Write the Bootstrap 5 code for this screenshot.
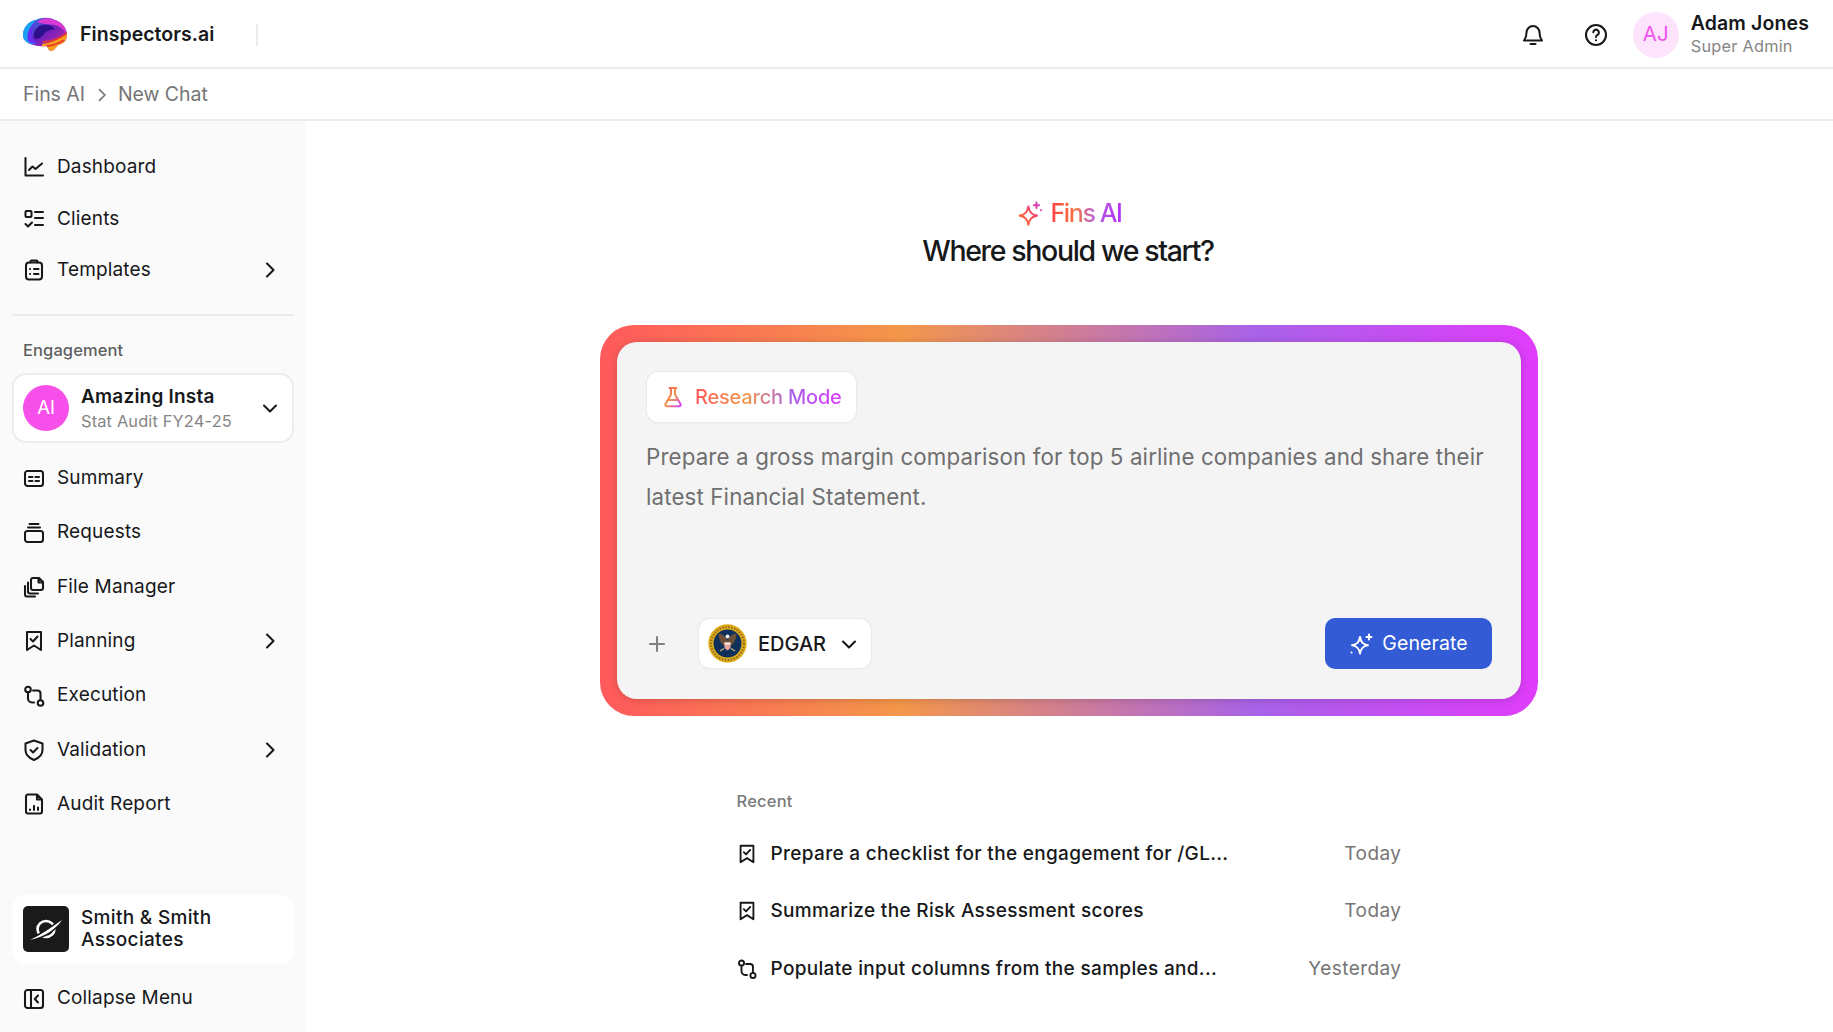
<!DOCTYPE html>
<html lang="en">
<head>
<meta charset="utf-8">
<title>Fins AI</title>
<link href="https://cdn.jsdelivr.net/npm/bootstrap@5.3.0/dist/css/bootstrap.min.css" rel="stylesheet">
<style>
html,body{height:100%}
body{font-family:Inter,"Liberation Sans",sans-serif;color:#17181a;background:#fff;overflow:hidden;font-size:19px}
svg.ico{width:24px;height:24px;fill:none;stroke:currentColor;stroke-width:2.05;stroke-linecap:round;stroke-linejoin:round;flex:none}
svg.ico.stroke-spark{stroke:url(#gradSpark);width:26px;height:26px;stroke-width:1.9}
svg.ico.stroke-flask{stroke:url(#gradFlask)}
.topbar{height:69px;border-bottom:2px solid #ececec;padding:2px 24px 0 22px}
.brand-name{font-size:19.5px;font-weight:600;letter-spacing:.05px;margin-left:12px}
.vsep{width:2px;height:22px;background:#ececec;margin-left:41px}
.tool-ico{color:#17181a;margin-right:38.5px}
.tool-ico:last-of-type{margin-right:25px}
.person-av{width:46px;height:46px;background:#fde3fc;color:#ee55ee;font-size:20.5px}
.person-block{margin-bottom:2px}
.person-name{font-size:19.5px;font-weight:600;line-height:24px;letter-spacing:.12px}
.person-role{font-size:16.3px;color:#858585;line-height:22px;letter-spacing:.25px}
.crumbs{height:52px;border-bottom:2px solid #ececec;padding:2px 23px 0;color:#757575;font-size:19.5px;letter-spacing:-.05px}
.crumbs svg{width:20px;height:20px;margin:0 6px 0 7px}
.shell{height:911px}
.side{width:305px;background:#fafafa;padding:20px 11.5px 7px;flex:none}
.menu-row{padding:1.500px 11.5px 0 10.5px;gap:11px;color:#17181a;font-size:19px;text-decoration:none;letter-spacing:.15px}
.rowa{height:51.4px}
.rowb{height:54.4px}
.rule{height:2px;background:#ebebeb;margin:19px 0 0}
.eng-label{font-size:16.5px;font-weight:500;color:#5f5f5f;margin:23px 0 12px 11.5px;line-height:22px;letter-spacing:.1px}
.eng-card{height:70px;background:#fff;border:2px solid #ececec;border-radius:14px;padding:0 9.5px;margin-bottom:7px}
.eng-av{width:46px;height:46px;background:#f74fe9;color:#fff;font-size:18.5px}
.eng-block{padding-top:2px}
.eng-name{font-size:19px;font-weight:600;line-height:25px;letter-spacing:.2px}
.eng-sub{font-size:16.4px;color:#858585;line-height:25px;letter-spacing:.15px}
.firm-card{height:69px;background:#fff;border-radius:14px;padding:0 11.5px;margin-bottom:7px}
.firm-logo{width:46px;height:46px;background:#1a1a1a;border-radius:5px}
.firm-name{font-size:19px;font-weight:500;line-height:22px;letter-spacing:.32px}
.canvas{padding-top:74px}
.fins-line{height:36px;gap:8px;padding-top:1px}
.grad-txt{background:linear-gradient(90deg,#ff5a5c 0%,#f4974a 38%,#a862e8 68%,#e03cfb 100%);-webkit-background-clip:text;background-clip:text;color:transparent;white-space:nowrap}
.fins-word{font-size:25px;font-weight:500;letter-spacing:-1.4px;background-image:linear-gradient(90deg,#ff4141 0%,#f8743e 35%,#b862d8 62%,#b32fff 100%)}
.hero{font-size:28.5px;font-weight:500;letter-spacing:-1.37px;line-height:40px;margin:0 2px 0 0}
.ring{width:938px;height:391px;margin-top:54px;border-radius:34px;padding:17px;background:linear-gradient(90deg,#ff595c 0%,#f4974a 32%,#a862e8 70%,#e03cfb 100%)}
.well{height:100%;background:#f4f4f4;border-radius:20px;padding:29px 29px 30px 30px;box-shadow:0 1px 8px rgba(0,0,0,.18)}
.chip{background:#fff;border-radius:11px;box-shadow:0 0 0 1px #e9e9e9,0 1px 3px rgba(0,0,0,.05);height:50px}
.chip-mode{width:209px;padding:0 14px;gap:10px;margin-top:1px}
.chip-mode span{font-size:20px;font-weight:500;letter-spacing:-.2px;background-image:linear-gradient(90deg,#ff5a5c 0%,#f4974a 35%,#a862e8 66%,#e03cfb 100%)}
.prompt{font-size:22.3px;line-height:40px;color:#6f6f6f;margin:15px 0 0 -1px;letter-spacing:.14px}
.plus{color:#808080;margin-right:30px;margin-left:-2px}
.chip-source{width:172px;padding:0 10px 0 9px;gap:11px;height:49px}
.chip-source b{font-size:20px;font-weight:500}
.go-btn{width:167px;height:51px;background:#335bd6;border:0;border-radius:10px;color:#fff;font-size:19.5px;gap:9px;letter-spacing:.1px}
.go-btn:hover{background:#335bd6;color:#fff}
.recent{width:665px;margin-top:72px}
.recent-title{font-size:16.5px;font-weight:500;color:#7a7a7a;line-height:26px;letter-spacing:.2px;margin-bottom:11px}
.recent-row{height:57.5px;font-size:19px;font-weight:500;letter-spacing:.32px}
.recent-row svg{margin-right:13px;margin-left:-1px;width:22px;height:22px}
.when{color:#757575;font-weight:400;letter-spacing:.45px}
</style>
</head>
<body>
<svg width="0" height="0" class="position-absolute">
<defs>
<linearGradient id="gradFlask" x1="0" y1="0" x2="1" y2="1"><stop offset="0" stop-color="#ff5a5c"/><stop offset=".5" stop-color="#f4974a"/><stop offset="1" stop-color="#d040fa"/></linearGradient>
<linearGradient id="gradSpark" gradientUnits="userSpaceOnUse" x1="2" y1="22" x2="24" y2="2"><stop offset="0" stop-color="#ff7a2a"/><stop offset=".5" stop-color="#ff4a5a"/><stop offset="1" stop-color="#c040e0"/></linearGradient>
<linearGradient id="brainA" x1="0" y1="0" x2="1" y2="1"><stop offset="0" stop-color="#1f8cf0"/><stop offset=".45" stop-color="#6a1fc0"/><stop offset="1" stop-color="#e0309a"/></linearGradient>
<clipPath id="brainClip"><path d="M1 18C1 10 7 4 14 3c5-3 14-3 19 0 7 2 12 8 12 15 0 6-4 9-9 10-2 3-5 6-7 6s-3-3-4-5c-7 1-15-1-19-3-3-2-5-4-5-8z"/></clipPath>
<symbol id="i-chart" viewBox="0 0 24 24"><path d="M3.500 3v17.500H21M7 15l3.500-3.500 3 2.500L20 8.500"/></symbol>
<symbol id="i-list" viewBox="0 0 24 24"><rect x="3.500" y="4" width="6" height="6" rx="1"/><path d="M13 5h8M13 11h8M13 18h8M3.500 17l2.500 2.500 4-4"/></symbol>
<symbol id="i-clip" viewBox="0 0 24 24"><rect x="4" y="4.500" width="16" height="17" rx="3"/><path d="M8.500 4.500V3.500a1 1 0 0 1 1-1h5a1 1 0 0 1 1 1v1M8 11h.1M12 11h4.500M8 16h.1M12 16h4.500"/></symbol>
<symbol id="i-card" viewBox="0 0 24 24"><rect x="3" y="5" width="18" height="15" rx="2.500"/><path d="M7 11h3.500M13.500 11H17M7 15h3.500M13.500 15H17"/></symbol>
<symbol id="i-stack" viewBox="0 0 24 24"><rect x="3" y="10" width="18" height="11" rx="2.500"/><path d="M6 6.500h12M7.500 3h9"/></symbol>
<symbol id="i-files" viewBox="0 0 24 24"><path d="M9 13V5a2 2 0 0 1 2-2h6l4 4v6a2 2 0 0 1-2 2h-8a2 2 0 0 1-2-2zM16.500 3v4.500H21M6 7.500v9a2 2 0 0 0 2 2h8M3 11v8.500a2 2 0 0 0 2 2h8"/></symbol>
<symbol id="i-mark" viewBox="0 0 24 24"><path d="M5 3h14v18l-7-4.500L5 21zM8.500 10l2.500 2.500 4.500-5"/></symbol>
<symbol id="i-flow" viewBox="0 0 24 24"><circle cx="6" cy="5.500" r="2.800"/><circle cx="18.500" cy="19" r="2.800"/><path d="M6 8.500v6a4 4 0 0 0 4 4h2M18.500 16v-6.500a3 3 0 0 0-3-3H11"/></symbol>
<symbol id="i-shield" viewBox="0 0 24 24"><path d="M12 2.500l8.500 3v6.500c0 5-3.500 8-8.500 10-5-2-8.500-5-8.500-10V5.500zM8.500 12l2.500 2.500 4.500-4.500"/></symbol>
<symbol id="i-report" viewBox="0 0 24 24"><path d="M6 2.500h9l5 5v12a2 2 0 0 1-2 2H6a2 2 0 0 1-2-2v-15a2 2 0 0 1 2-2zM15 2.500v5h5M8 18v-.5M12 18v-4M16 18v-2.500"/></symbol>
<symbol id="i-collapse" viewBox="0 0 24 24"><rect x="3" y="3" width="18" height="18" rx="2.500"/><path d="M9 3v18M16 8.500L12.800 12l3.200 3.500"/></symbol>
<symbol id="i-right" viewBox="0 0 24 24"><path d="M9 5.500l6.500 6.500L9 18.500"/></symbol>
<symbol id="i-down" viewBox="0 0 24 24"><path d="M6 9.500l6 6 6-6"/></symbol>
<symbol id="i-spark" viewBox="0 0 24 24"><path d="M10.500 5c.9 5 2.600 7.600 8 8.500-5.400.9-7.100 3.500-8 8.500-.9-5-2.600-7.600-8-8.500 5.400-.9 7.100-3.500 8-8.500zM18 1.500v5M15.500 4h5M22 8.500h.1"/></symbol>
<symbol id="i-spark-w" viewBox="0 0 24 24"><path d="M11 5c.9 5 2.600 7.300 8 8.200-5.400.9-7.100 3.300-8 8.300-.9-5-2.600-7.400-8-8.300 5.400-.9 7.100-3.200 8-8.200zM20 2.500v5M17.500 5h5M2.500 20.500h.1"/></symbol>
</defs>
</svg>

<header class="topbar d-flex align-items-center">
  <svg width="46" height="36" viewBox="0 0 46 36" aria-label="Finspectors logo">
    <g clip-path="url(#brainClip)">
      <rect width="46" height="36" fill="url(#brainA)"/>
      <path d="M0 22C0 12 6 3 16 1c-4 4-8 8-8 14 0 5 3 9 7 12-7 0-13-1-15-5z" fill="#19a2f2"/>
      <path d="M6 24C4 16 8 9 14 5c-3 4-5 8-4 13 0 3 2 6 5 9-3 0-7-1-9-3z" fill="#6a2cf0"/>
      <path d="M12 21c-1-7 3-12 9-13 6-1 10 1 12 5-5-1-9 1-12 5-2 3-6 5-9 3z" fill="#2c0f8a"/>
      <path d="M15 5c6-5 16-5 22 0 5 3 8 8 8 13-2-5-7-9-13-10-6-1-12-1-17-3z" fill="#d63ad2"/>
      <path d="M20 27c8-1 16-4 26-11v18H20z" fill="#f7a01e"/>
      <path d="M21 25c8 0 16-3 24-9M24 29c6 0 12-2 18-6" stroke="#e8352e" stroke-width="1.800" fill="none"/>
    </g>
  </svg>
  <span class="brand-name">Finspectors.ai</span>
  <span class="vsep"></span>
  <span class="ms-auto d-flex align-items-center">
    <svg class="ico tool-ico" viewBox="0 0 24 24"><path d="M12 3a6.500 6.500 0 0 0-6.500 6.500c0 4.500-1 6-2.500 8h18c-1.500-2-2.500-3.500-2.500-8A6.500 6.500 0 0 0 12 3zM9.500 21h5"/></svg>
    <svg class="ico tool-ico" viewBox="0 0 24 24"><circle cx="12" cy="12" r="10"/><path d="M9.300 9.300a2.800 2.800 0 1 1 4.200 2.600c-1 .6-1.500 1.100-1.500 2.100M12 17.200h.1"/></svg>
    <span class="person-av rounded-circle d-flex align-items-center justify-content-center flex-shrink-0">AJ</span>
    <span class="person-block ms-2 ps-1">
      <span class="person-name d-block">Adam Jones</span>
      <span class="person-role d-block">Super Admin</span>
    </span>
  </span>
</header>

<nav class="crumbs d-flex align-items-center" aria-label="breadcrumb">
  <span>Fins AI</span>
  <svg class="ico" viewBox="0 0 24 24"><use href="#i-right"/></svg>
  <span>New Chat</span>
</nav>

<div class="shell d-flex">
  <aside class="side d-flex flex-column">
    <a class="menu-row rowa d-flex align-items-center flex-shrink-0"><svg class="ico"><use href="#i-chart"/></svg>Dashboard</a>
    <a class="menu-row rowa d-flex align-items-center flex-shrink-0"><svg class="ico"><use href="#i-list"/></svg>Clients</a>
    <a class="menu-row rowa d-flex align-items-center flex-shrink-0"><svg class="ico"><use href="#i-clip"/></svg>Templates<svg class="ico ms-auto"><use href="#i-right"/></svg></a>
    <div class="rule flex-shrink-0"></div>
    <div class="eng-label">Engagement</div>
    <div class="eng-card d-flex align-items-center flex-shrink-0">
      <span class="eng-av rounded-circle d-flex align-items-center justify-content-center flex-shrink-0">AI</span>
      <span class="eng-block ms-2 ps-1">
        <span class="eng-name d-block">Amazing Insta</span>
        <span class="eng-sub d-block">Stat Audit FY24-25</span>
      </span>
      <svg class="ico ms-auto"><use href="#i-down"/></svg>
    </div>
    <a class="menu-row rowb d-flex align-items-center flex-shrink-0"><svg class="ico"><use href="#i-card"/></svg>Summary</a>
    <a class="menu-row rowb d-flex align-items-center flex-shrink-0"><svg class="ico"><use href="#i-stack"/></svg>Requests</a>
    <a class="menu-row rowb d-flex align-items-center flex-shrink-0"><svg class="ico"><use href="#i-files"/></svg>File Manager</a>
    <a class="menu-row rowb d-flex align-items-center flex-shrink-0"><svg class="ico"><use href="#i-mark"/></svg>Planning<svg class="ico ms-auto"><use href="#i-right"/></svg></a>
    <a class="menu-row rowb d-flex align-items-center flex-shrink-0"><svg class="ico"><use href="#i-flow"/></svg>Execution</a>
    <a class="menu-row rowb d-flex align-items-center flex-shrink-0"><svg class="ico"><use href="#i-shield"/></svg>Validation<svg class="ico ms-auto"><use href="#i-right"/></svg></a>
    <a class="menu-row rowb d-flex align-items-center flex-shrink-0"><svg class="ico"><use href="#i-report"/></svg>Audit Report</a>
    <div class="firm-card d-flex align-items-center mt-auto flex-shrink-0">
      <span class="firm-logo d-flex align-items-center justify-content-center flex-shrink-0">
        <svg width="34" height="28" viewBox="0 0 34 28" aria-label="Firm logo">
          <ellipse cx="17" cy="14" rx="8.500" ry="8" fill="none" stroke="#fff" stroke-width="2.600"/>
          <path d="M1 25C11 20 22 13 33 5 28 13 16 22 1 25z" fill="#1a1a1a" stroke="#1a1a1a" stroke-width="3"/>
          <path d="M1 25C11 20 22 13 33 5 28 13 16 22 1 25z" fill="#fff"/>
        </svg>
      </span>
      <span class="firm-name ms-2 ps-1">Smith &amp; Smith Associates</span>
    </div>
    <a class="menu-row rowb d-flex align-items-center flex-shrink-0"><svg class="ico"><use href="#i-collapse"/></svg>Collapse Menu</a>
  </aside>

  <main class="canvas flex-grow-1 d-flex flex-column align-items-center overflow-hidden">
    <div class="fins-line d-flex align-items-center">
      <svg class="ico stroke-spark" viewBox="0 0 24 24"><use href="#i-spark"/></svg>
      <span class="grad-txt fins-word">Fins AI</span>
    </div>
    <h1 class="hero">Where should we start?</h1>

    <section class="ring">
      <div class="well d-flex flex-column">
        <div class="chip chip-mode d-flex align-items-center">
          <svg class="ico stroke-flask" viewBox="0 0 24 24"><path d="M8.500 3h7M10 3v6.500L4.500 19a1.500 1.500 0 0 0 1.300 2.200h12.400a1.500 1.500 0 0 0 1.300-2.200L14 9.500V3M7.500 15h9"/></svg>
          <span class="grad-txt">Research Mode</span>
        </div>
        <p class="prompt">Prepare a gross margin comparison for top 5 airline companies and share their latest Financial Statement.</p>
        <div class="d-flex align-items-center mt-auto">
          <svg class="ico plus" viewBox="0 0 24 24"><path d="M12 5v14M5 12h14"/></svg>
          <div class="chip chip-source d-flex align-items-center">
            <svg width="39" height="39" viewBox="0 0 39 39" class="flex-shrink-0" aria-label="SEC seal">
              <circle cx="19.500" cy="19.500" r="19.200" fill="#e0ac1c"/>
              <circle cx="19.500" cy="19.500" r="16.500" fill="none" stroke="#8a6d1a" stroke-width="2" stroke-dasharray="1.500 1.500"/>
              <circle cx="19.500" cy="19.500" r="14" fill="#10305c"/>
              <path d="M19.500 17c-1.500-4-4.500-7-9-7.500 0 5.500 2.500 10.500 6.500 13h5c4-2.500 6.500-7.500 6.500-13-4.500.5-7.500 3.500-9 7.500z" fill="#6b4f36"/>
              <circle cx="19.500" cy="12.500" r="2" fill="#f4f0e6"/>
              <path d="M16.500 18.500h6v5.500l-3 2.500-3-2.500z" fill="#eaa6a0"/>
              <path d="M16.500 18.500h6v2h-6z" fill="#f4f0e6"/>
              <path d="M12 27l4-2.500M27 27l-4-2.500" stroke="#c9b98a" stroke-width="1.200"/>
            </svg>
            <b>EDGAR</b>
            <svg class="ico ms-auto" viewBox="0 0 24 24"><use href="#i-down"/></svg>
          </div>
          <button class="btn go-btn ms-auto d-flex align-items-center justify-content-center" type="button">
            <svg class="ico" viewBox="0 0 24 24"><use href="#i-spark-w"/></svg>Generate
          </button>
        </div>
      </div>
    </section>

    <section class="recent">
      <div class="recent-title">Recent</div>
      <div class="recent-row d-flex align-items-center"><svg class="ico"><use href="#i-mark"/></svg><span>Prepare a checklist for the engagement for /GL...</span><span class="when ms-auto">Today</span></div>
      <div class="recent-row d-flex align-items-center"><svg class="ico"><use href="#i-mark"/></svg><span>Summarize the Risk Assessment scores</span><span class="when ms-auto">Today</span></div>
      <div class="recent-row d-flex align-items-center"><svg class="ico"><use href="#i-flow"/></svg><span>Populate input columns from the samples and...</span><span class="when ms-auto">Yesterday</span></div>
    </section>
  </main>
</div>
<script src="https://cdn.jsdelivr.net/npm/bootstrap@5.3.0/dist/js/bootstrap.bundle.min.js"></script>
</body>
</html>
